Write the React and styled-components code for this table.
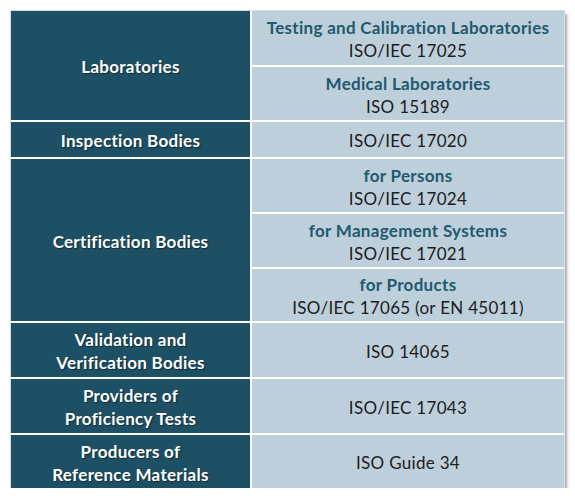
import React from "react";
import styled, { createGlobalStyle } from "styled-components";

const Global = createGlobalStyle`
  html, body { margin: 0; padding: 0; background: #ffffff; }
  body { font-family: Lato, "Open Sans", sans-serif; }
`;

const Page = styled.div`
  padding: 11px 0 0 11px;
`;

const Table = styled.div`
  display: grid;
  grid-template-columns: 239px 312px;
  grid-template-rows: 54px 53px 35px 53px 53px 52px 54px 54px 53px;
  gap: 2px;
  width: 553px;
  background: #ffffff;
  outline: 1px solid #d6dee3;
  box-shadow: 3px 3px 3px rgba(0, 0, 0, 0.35);
`;

const Head = styled.div`
  grid-column: 1;
  grid-row: ${(p) => p.$row} / span ${(p) => p.$span || 1};
  background: #1d5064;
  color: #ffffff;
  font-weight: 700;
  font-size: 17px;
  letter-spacing: 0.3px;
  line-height: 23px;
  display: flex;
  align-items: center;
  justify-content: center;
  text-align: center;
  text-shadow: 1px 1px 1px rgba(0, 0, 0, 0.45);
  padding-top: 2px;
  box-sizing: border-box;
`;

const Cell = styled.div`
  grid-column: 2;
  grid-row: ${(p) => p.$row};
  background: #bdcfdb;
  display: flex;
  flex-direction: column;
  align-items: center;
  justify-content: center;
  text-align: center;
  font-size: 17px;
  letter-spacing: 0.3px;
  line-height: 23px;
  color: #1c1c1c;
  padding-top: 2px;
  box-sizing: border-box;
`;

const Title = styled.div`
  color: #21596d;
  font-weight: 700;
`;

const Std = styled.div``;

const rows = [
  { row: 1, title: "Testing and Calibration Laboratories", std: "ISO/IEC 17025" },
  { row: 2, title: "Medical Laboratories", std: "ISO 15189" },
  { row: 3, std: "ISO/IEC 17020" },
  { row: 4, title: "for Persons", std: "ISO/IEC 17024" },
  { row: 5, title: "for Management Systems", std: "ISO/IEC 17021" },
  { row: 6, title: "for Products", std: "ISO/IEC 17065 (or EN 45011)" },
  { row: 7, std: "ISO 14065" },
  { row: 8, std: "ISO/IEC 17043" },
  { row: 9, std: "ISO Guide 34" },
];

const heads = [
  { row: 1, span: 2, label: ["Laboratories"] },
  { row: 3, span: 1, label: ["Inspection Bodies"] },
  { row: 4, span: 3, label: ["Certification Bodies"] },
  { row: 7, span: 1, label: ["Validation and", "Verification Bodies"] },
  { row: 8, span: 1, label: ["Providers of", "Proficiency Tests"] },
  { row: 9, span: 1, label: ["Producers of", "Reference Materials"] },
];

export default function App() {
  return (
    <Page>
      <Global />
      <Table>
        {heads.map((h) => (
          <Head key={h.row} $row={h.row} $span={h.span}>
            <div>
              {h.label.map((l, i) => (
                <div key={i}>{l}</div>
              ))}
            </div>
          </Head>
        ))}
        {rows.map((r) => (
          <Cell key={r.row} $row={r.row}>
            {r.title && <Title>{r.title}</Title>}
            <Std>{r.std}</Std>
          </Cell>
        ))}
      </Table>
    </Page>
  );
}
